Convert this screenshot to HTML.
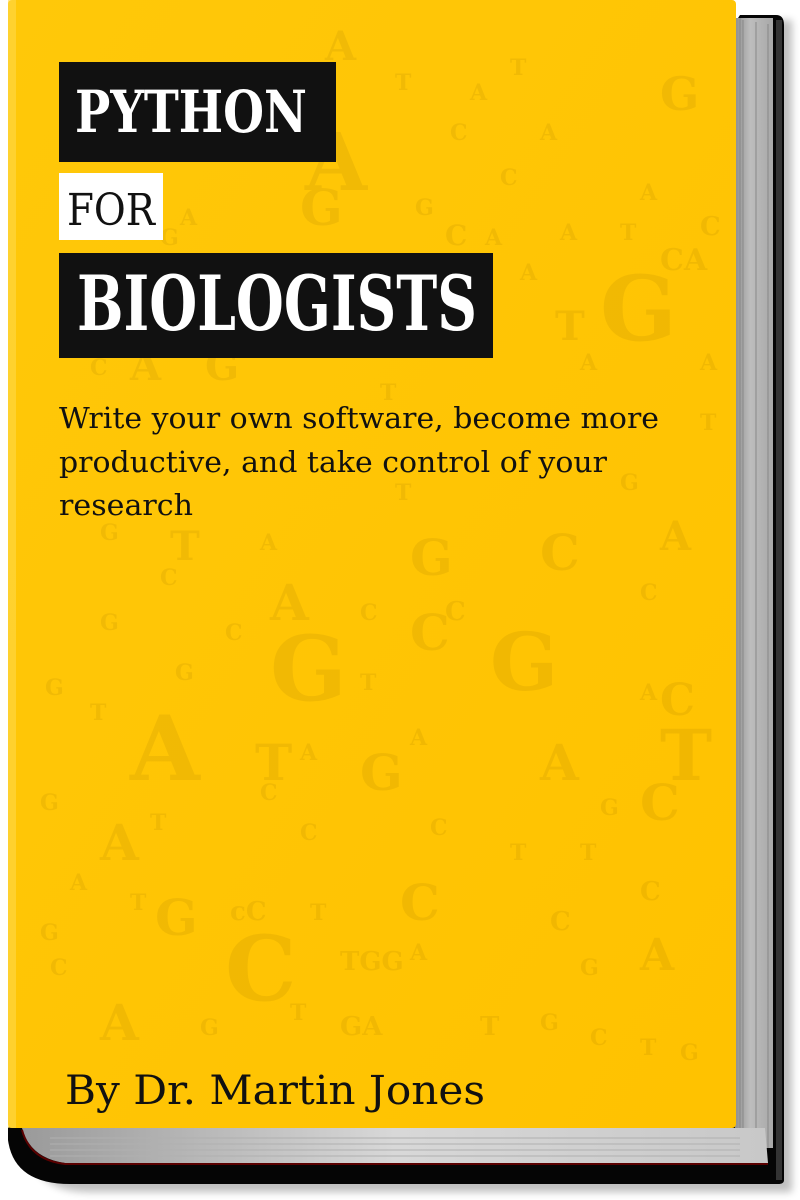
<!DOCTYPE html>
<html><head><meta charset="utf-8"><style>
html,body{margin:0;padding:0;background:#fff;width:800px;height:1200px;overflow:hidden}
svg{display:block}
</style></head><body>
<svg width="800" height="1200" viewBox="0 0 800 1200" xmlns="http://www.w3.org/2000/svg">
<defs>
<linearGradient id="pg" x1="0" x2="1" y1="0" y2="0">
<stop offset="0" stop-color="#9a9a9a"/><stop offset="0.5" stop-color="#d8d8d8"/><stop offset="1" stop-color="#c8c8c8"/>
</linearGradient>
<linearGradient id="rp" x1="0" x2="1">
<stop offset="0" stop-color="#8f8f8f"/><stop offset="0.4" stop-color="#bdbdbd"/><stop offset="1" stop-color="#a8a8a8"/>
</linearGradient>
<linearGradient id="cov" x1="0" x2="1" y1="0" y2="1">
<stop offset="0" stop-color="#ffc809"/><stop offset="1" stop-color="#ffc200"/>
</linearGradient>
<filter id="sh" x="-10%" y="-10%" width="130%" height="130%"><feGaussianBlur stdDeviation="4"/></filter>
</defs>
<path d="M30 1140 Q30 1192 90 1192 L792 1192 L792 20 L780 20 Z" fill="#000" opacity="0.25" filter="url(#sh)"/>
<path d="M740 15 L776 15 Q784 15 784 25 L784 1180 Q784 1184 778 1184 L70 1184 Q14 1184 8 1140 L8 1128 Z" fill="#050505"/>
<rect x="776" y="20" width="6" height="1160" fill="#333"/>
<rect x="735" y="18" width="38" height="1130" fill="url(#rp)"/>
<g stroke="#888" stroke-width="1">
<line x1="740" y1="18" x2="740" y2="1148"/><line x1="743" y1="20" x2="743" y2="1148"/>
<line x1="756" y1="22" x2="756" y2="1148"/><line x1="768" y1="24" x2="768" y2="1148"/>
</g>
<path d="M22 1128 L735 1128 L765 1128 L768 1163 L65 1163 Q30 1158 22 1128 Z" fill="url(#pg)"/>
<g stroke="#b0b0b0" stroke-width="1">
<line x1="50" y1="1138" x2="740" y2="1138"/><line x1="50" y1="1144" x2="740" y2="1144"/>
<line x1="50" y1="1150" x2="740" y2="1150"/><line x1="50" y1="1156" x2="740" y2="1156"/>
</g>
<path d="M22 1130 Q30 1160 65 1164 L768 1164" stroke="#5a0000" stroke-width="2" fill="none"/>
<rect x="8" y="0" width="728" height="1128" rx="4" fill="url(#cov)"/>
<rect x="8" y="0" width="8" height="1128" fill="#ffd84a" opacity="0.6"/>
<g font-family="DejaVu Serif, serif" font-weight="bold" fill="#9a6d00" opacity="0.13">
<text x="325" y="60" font-size="40">A</text><text x="395" y="90" font-size="22">T</text><text x="470" y="100" font-size="22">A</text><text x="510" y="75" font-size="22">T</text>
<text x="660" y="110" font-size="46">G</text><text x="450" y="140" font-size="22">C</text><text x="540" y="140" font-size="22">A</text>
<text x="305" y="190" font-size="80">A</text><text x="300" y="225" font-size="50">G</text><text x="500" y="185" font-size="22">C</text>
<text x="640" y="200" font-size="22">A</text><text x="700" y="235" font-size="26">C</text><text x="415" y="215" font-size="22">G</text>
<text x="445" y="245" font-size="28">C</text><text x="485" y="245" font-size="22">A</text><text x="560" y="240" font-size="22">A</text><text x="620" y="240" font-size="22">T</text>
<text x="660" y="270" font-size="30">CA</text><text x="180" y="225" font-size="22">A</text><text x="160" y="245" font-size="22">G</text>
<text x="600" y="340" font-size="90">G</text><text x="555" y="340" font-size="40">T</text><text x="520" y="280" font-size="22">A</text>
<text x="90" y="375" font-size="22">C</text><text x="130" y="380" font-size="40">A</text><text x="205" y="380" font-size="40">G</text>
<text x="580" y="370" font-size="22">A</text><text x="700" y="370" font-size="22">A</text><text x="380" y="400" font-size="22">T</text>
<text x="700" y="430" font-size="22">T</text><text x="395" y="500" font-size="22">T</text><text x="620" y="490" font-size="22">G</text>
<text x="100" y="540" font-size="22">G</text><text x="170" y="560" font-size="40">T</text><text x="260" y="550" font-size="22">A</text>
<text x="410" y="575" font-size="50">G</text><text x="540" y="570" font-size="50">C</text><text x="660" y="550" font-size="40">A</text>
<text x="160" y="585" font-size="22">C</text><text x="270" y="620" font-size="50">A</text><text x="360" y="620" font-size="22">C</text>
<text x="445" y="620" font-size="26">C</text><text x="640" y="600" font-size="22">C</text><text x="100" y="630" font-size="22">G</text>
<text x="225" y="640" font-size="22">C</text><text x="270" y="700" font-size="90">G</text><text x="490" y="690" font-size="80">G</text>
<text x="410" y="650" font-size="50">C</text><text x="175" y="680" font-size="22">G</text><text x="360" y="690" font-size="22">T</text>
<text x="45" y="695" font-size="22">G</text><text x="640" y="700" font-size="22">A</text><text x="660" y="715" font-size="44">C</text>
<text x="130" y="780" font-size="90">A</text><text x="255" y="780" font-size="50">T</text><text x="360" y="790" font-size="50">G</text>
<text x="300" y="760" font-size="22">A</text><text x="410" y="745" font-size="22">A</text><text x="540" y="780" font-size="50">A</text>
<text x="660" y="780" font-size="70">T</text><text x="640" y="820" font-size="50">C</text><text x="90" y="720" font-size="22">T</text>
<text x="40" y="810" font-size="22">G</text><text x="100" y="860" font-size="50">A</text><text x="150" y="830" font-size="22">T</text>
<text x="260" y="800" font-size="22">C</text><text x="430" y="835" font-size="22">C</text><text x="600" y="815" font-size="22">G</text>
<text x="300" y="840" font-size="22">C</text><text x="510" y="860" font-size="22">T</text><text x="580" y="860" font-size="22">T</text>
<text x="70" y="890" font-size="22">A</text><text x="130" y="910" font-size="22">T</text><text x="155" y="935" font-size="50">G</text>
<text x="230" y="920" font-size="26">cC</text><text x="310" y="920" font-size="22">T</text><text x="400" y="920" font-size="50">C</text>
<text x="550" y="930" font-size="26">C</text><text x="640" y="900" font-size="26">C</text><text x="40" y="940" font-size="22">G</text>
<text x="225" y="1000" font-size="90">C</text><text x="340" y="970" font-size="26">TGG</text><text x="410" y="960" font-size="22">A</text>
<text x="640" y="970" font-size="44">A</text><text x="580" y="975" font-size="22">G</text><text x="50" y="975" font-size="22">C</text>
<text x="100" y="1040" font-size="50">A</text><text x="200" y="1035" font-size="22">G</text><text x="340" y="1035" font-size="26">GA</text>
<text x="480" y="1035" font-size="26">T</text><text x="540" y="1030" font-size="22">G</text><text x="590" y="1045" font-size="22">C</text>
<text x="640" y="1055" font-size="22">T</text><text x="680" y="1060" font-size="22">G</text><text x="290" y="1020" font-size="22">T</text>
</g>
<rect x="59" y="62" width="277" height="100" fill="#111"/>
<text x="75" y="132" font-family="DejaVu Serif, serif" font-weight="bold" font-size="58" fill="#fff" textLength="232" lengthAdjust="spacingAndGlyphs">PYTHON</text>
<rect x="59" y="173" width="104" height="67" fill="#fff"/>
<text x="67" y="225" font-family="DejaVu Serif, serif" font-size="44" fill="#111" textLength="88" lengthAdjust="spacingAndGlyphs">FOR</text>
<rect x="59" y="253" width="434" height="105" fill="#111"/>
<text x="77" y="330" font-family="DejaVu Serif, serif" font-weight="bold" font-size="76" fill="#fff" textLength="400" lengthAdjust="spacingAndGlyphs">BIOLOGISTS</text>
<g font-family="DejaVu Serif, serif" font-size="29" fill="#111">
<text x="59" y="428" textLength="600" lengthAdjust="spacingAndGlyphs">Write your own software, become more</text>
<text x="59" y="472" textLength="548" lengthAdjust="spacingAndGlyphs">productive, and take control of your</text>
<text x="59" y="515" textLength="134" lengthAdjust="spacingAndGlyphs">research</text>
</g>
<text x="65" y="1104" font-family="DejaVu Serif, serif" font-size="40" fill="#111" textLength="420" lengthAdjust="spacingAndGlyphs">By Dr. Martin Jones</text>
</svg>
</body></html>
